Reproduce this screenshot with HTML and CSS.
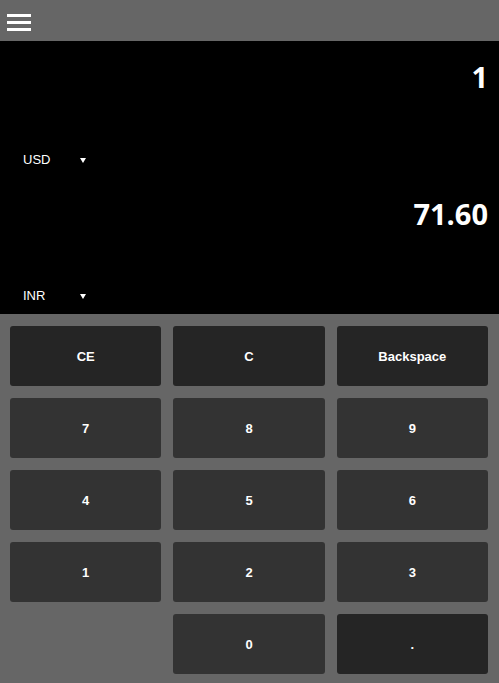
FILE: index.html
```html
<!DOCTYPE html>
<html>
<head>
<meta charset="utf-8">
<link rel="stylesheet" href="styles.css">
</head>
<body>
<header class="topbar">
  <button class="menu" aria-label="Menu">
    <span></span><span></span><span></span>
  </button>
</header>
<main class="display">
  <section class="panel">
    <div class="amount">1</div>
    <div class="currency"><span class="code">USD</span><svg class="caret" width="6" height="5" viewBox="0 0 6 5"><path d="M0 0H6L3 5Z" fill="#fff"/></svg></div>
  </section>
  <section class="panel">
    <div class="amount">71.60</div>
    <div class="currency"><span class="code">INR</span><svg class="caret" width="6" height="5" viewBox="0 0 6 5"><path d="M0 0H6L3 5Z" fill="#fff"/></svg></div>
  </section>
</main>
<div class="keypad">
  <button class="key op">CE</button>
  <button class="key op">C</button>
  <button class="key op">Backspace</button>
  <button class="key">7</button>
  <button class="key">8</button>
  <button class="key">9</button>
  <button class="key">4</button>
  <button class="key">5</button>
  <button class="key">6</button>
  <button class="key">1</button>
  <button class="key">2</button>
  <button class="key">3</button>
  <div class="blank"></div>
  <button class="key">0</button>
  <button class="key op">.</button>
</div>
</body>
</html>
```
FILE: styles.css
```css
* { box-sizing: border-box; }
html, body { margin: 0; padding: 0; }
body {
  width: 499px;
  height: 683px;
  background: #666666;
  font-family: "Liberation Sans", Arial, sans-serif;
  color: #fff;
  overflow: hidden;
}
.topbar {
  height: 41px;
  background: #666666;
  display: flex;
  align-items: flex-start;
}
.menu {
  border: 0;
  background: none;
  padding: 14px 0 0 7px;
  display: flex;
  flex-direction: column;
  gap: 4px;
  cursor: pointer;
}
.menu span {
  display: block;
  width: 24px;
  height: 3px;
  background: #fff;
}
.display {
  height: 273px;
  background: #000;
  display: grid;
  grid-template-rows: 137px 136px;
}
.panel {
  display: flex;
  flex-direction: column;
  justify-content: space-between;
  padding: 20px 11px 10px 23px;
}
.amount {
  text-align: right;
  font-family: "Open Sans", sans-serif;
  font-weight: 700;
  font-size: 29px;
  line-height: 32px;
}
.currency {
  display: flex;
  align-items: center;
  font-size: 13px;
  line-height: 16px;
  margin-bottom: 0;
}
.code {
  width: 57px;
}
.caret {
  margin-top: 1px;
}
.keypad {
  display: grid;
  grid-template-columns: repeat(3, 1fr);
  grid-auto-rows: 60px;
  gap: 12px;
  padding: 12px 11px 9px 10px;
}
.key {
  border: 0;
  border-radius: 3px;
  background: #333333;
  color: #fff;
  font-family: "Liberation Sans", Arial, sans-serif;
  font-weight: 700;
  font-size: 13px;
}
.key.op { background: #252525; }
```
